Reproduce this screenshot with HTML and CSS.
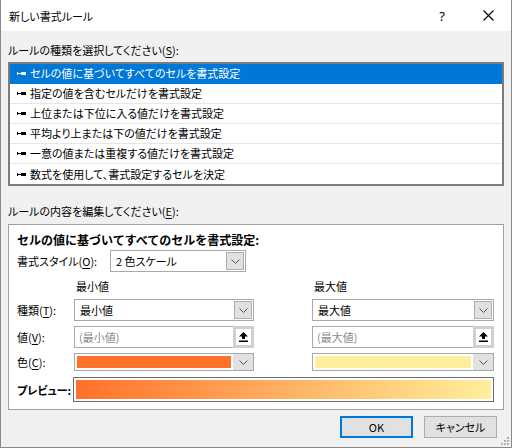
FILE: index.html
```html
<!DOCTYPE html>
<html lang="ja">
<head>
<meta charset="utf-8">
<title>新しい書式ルール</title>
<link rel="stylesheet" href="styles.css">
</head>
<body>
<div class="window">
  <div class="titlebar">
    <span class="title">新しい書式ルール</span>
    <span class="help">?</span>
    <span class="close"><svg width="11" height="11" viewBox="0 0 11 11"><path d="M0.5 0.5L10.5 10.5M10.5 0.5L0.5 10.5" stroke="#000" stroke-width="1.1" fill="none"/></svg></span>
  </div>
  <div class="body">
    <div class="label">ルールの種類を選択してください(<u>S</u>):</div>
    <ul class="rulelist">
      <li class="sel"><svg class="mark" width="9" height="5" viewBox="0 0 9 5"><path d="M0 1h1v3H0z M1 2h3v1H1z M4 1h5v3H4z" fill="currentColor"/></svg>セルの値に基づいてすべてのセルを書式設定</li>
      <li><svg class="mark" width="9" height="5" viewBox="0 0 9 5"><path d="M0 1h1v3H0z M1 2h3v1H1z M4 1h5v3H4z" fill="currentColor"/></svg>指定の値を含むセルだけを書式設定</li>
      <li><svg class="mark" width="9" height="5" viewBox="0 0 9 5"><path d="M0 1h1v3H0z M1 2h3v1H1z M4 1h5v3H4z" fill="currentColor"/></svg>上位または下位に入る値だけを書式設定</li>
      <li><svg class="mark" width="9" height="5" viewBox="0 0 9 5"><path d="M0 1h1v3H0z M1 2h3v1H1z M4 1h5v3H4z" fill="currentColor"/></svg>平均より上または下の値だけを書式設定</li>
      <li><svg class="mark" width="9" height="5" viewBox="0 0 9 5"><path d="M0 1h1v3H0z M1 2h3v1H1z M4 1h5v3H4z" fill="currentColor"/></svg>一意の値または重複する値だけを書式設定</li>
      <li><svg class="mark" width="9" height="5" viewBox="0 0 9 5"><path d="M0 1h1v3H0z M1 2h3v1H1z M4 1h5v3H4z" fill="currentColor"/></svg>数式を使用して、書式設定するセルを決定</li>
    </ul>
    <div class="label label2">ルールの内容を編集してください(<u>E</u>):</div>
    <div class="group">
      <div class="gtitle">セルの値に基づいてすべてのセルを書式設定:</div>
      <div class="stylerow">
        <span class="slabel">書式スタイル(<u>O</u>):</span>
        <div class="combo stylecombo"><span class="ctext">2 色スケール</span><span class="dd"><svg width="9" height="5" viewBox="0 0 9 5"><path d="M0.5 0.5L4.5 4.5L8.5 0.5" stroke="#555" fill="none"/></svg></span></div>
      </div>
      <div class="grid">
        <span></span><span class="colhead">最小値</span><span></span><span class="colhead">最大値</span>

        <span class="rlabel">種類(<u>T</u>):</span>
        <div class="combo"><span class="ctext">最小値</span><span class="dd"><svg width="9" height="5" viewBox="0 0 9 5"><path d="M0.5 0.5L4.5 4.5L8.5 0.5" stroke="#555" fill="none"/></svg></span></div>
        <span></span>
        <div class="combo"><span class="ctext">最大値</span><span class="dd"><svg width="9" height="5" viewBox="0 0 9 5"><path d="M0.5 0.5L4.5 4.5L8.5 0.5" stroke="#555" fill="none"/></svg></span></div>

        <span class="rlabel">値(<u>V</u>):</span>
        <div class="valuebox"><span class="vinput">(最小値)</span><span class="upbtn"><span class="upinner"><svg width="9" height="10" viewBox="0 0 9 10"><path d="M4.5 0L9 4.5H6V7H3V4.5H0z M0 8.5h9v1.5H0z" fill="#000"/></svg></span></span></div>
        <span></span>
        <div class="valuebox"><span class="vinput">(最大値)</span><span class="upbtn"><span class="upinner"><svg width="9" height="10" viewBox="0 0 9 10"><path d="M4.5 0L9 4.5H6V7H3V4.5H0z M0 8.5h9v1.5H0z" fill="#000"/></svg></span></span></div>

        <span class="rlabel">色(<u>C</u>):</span>
        <div class="combo colorcombo"><span class="swatch min"></span><span class="dd"><svg width="9" height="5" viewBox="0 0 9 5"><path d="M0.5 0.5L4.5 4.5L8.5 0.5" stroke="#555" fill="none"/></svg></span></div>
        <span></span>
        <div class="combo colorcombo"><span class="swatch max"></span><span class="dd"><svg width="9" height="5" viewBox="0 0 9 5"><path d="M0.5 0.5L4.5 4.5L8.5 0.5" stroke="#555" fill="none"/></svg></span></div>
      </div>
      <div class="previewrow">
        <span class="plabel">プレビュー:</span>
        <div class="preview"><div class="grad"></div></div>
      </div>
    </div>
    <div class="buttons">
      <button class="btn ok">OK</button>
      <button class="btn">キャンセル</button>
    </div>
  </div>
  <svg class="grip" width="8" height="8" viewBox="0 0 8 8"><path d="M6 0h2v2H6z M3 3h2v2H3z M6 3h2v2H6z M0 6h2v2H0z M3 6h2v2H3z M6 6h2v2H6z" fill="#b0b0b0"/></svg>
</div>
</body>
</html>
```

FILE: styles.css
```css
* { box-sizing: border-box; }
html, body {
  margin: 0;
  padding: 0;
  width: 512px;
  height: 448px;
  overflow: hidden;
}
body {
  font-family: "Noto Sans CJK JP", "Noto Sans", sans-serif;
  font-size: 11px;
  font-feature-settings: "palt";
  color: #000;
  background: #fff;
}
u { text-decoration-thickness: 1px; text-underline-offset: 2px; }

.window {
  position: relative;
  width: 512px;
  height: 448px;
  border: 1px solid #8a8a8a;
  border-top: none;
  display: flex;
  flex-direction: column;
  background: #f0f0f0;
}
.titlebar {
  height: 31px;
  background: #fff;
  display: flex;
  align-items: center;
  padding-left: 8px;
  flex: none;
}
.title { flex: 1; font-size: 11px; line-height: 16px; }
.help { width: 46px; text-align: center; font-size: 13px; font-family: "Noto Sans", sans-serif; }
.close { width: 46px; display: flex; justify-content: center; align-items: center; }

.body {
  flex: 1;
  padding: 11px 7px 0 7px;
  display: flex;
  flex-direction: column;
}
.label { line-height: 16px; height: 16px; white-space: nowrap; }
.label2 { margin-top: 17px; }

.rulelist {
  list-style: none;
  margin: 4px 0 0 0;
  padding: 0;
  border: 2px solid #7c7c7c;
  background: #fff;
  height: 124px;
}
.rulelist li {
  height: 20px;
  line-height: 19px;
  border-bottom: 1px solid #e6e6e6;
  display: flex;
  align-items: center;
  padding-left: 7px;
  white-space: nowrap;
}
.rulelist li:last-child { border-bottom: none; }
.rulelist li.sel { background: #0078d7; color: #fff; border-bottom-color: #0078d7; }
.mark { margin-right: 4px; flex: none; color: #000; }
.sel .mark { color: #fff; }

.group {
  margin-top: 5px;
  border: 1px solid #a0a0a0;
  background: #fff;
  height: 186px;
  padding: 7px 9px 0 8px;
}
.gtitle {
  font-weight: bold;
  font-size: 12px;
  font-feature-settings: normal;
  line-height: 16px;
  height: 16px;
  white-space: nowrap;
}
.stylerow { display: flex; align-items: center; margin-top: 2px; height: 22px; }
.slabel { width: 93px; flex: none; white-space: nowrap; }
.stylecombo { width: 136px; }

.combo {
  height: 22px;
  border: 1px solid #a9a9a9;
  background: #fff;
  display: flex;
  align-items: stretch;
  padding: 1px;
}
.ctext { flex: 1; padding-left: 4px; line-height: 18px; }
.dd {
  width: 18px;
  background: #e1e1e1;
  border: 1px solid #adadad;
  display: flex;
  align-items: center;
  justify-content: center;
}

.grid {
  display: grid;
  grid-template-columns: 57px 180px 58px 182px;
  grid-template-rows: 16px 22px 22px 18px;
  row-gap: 5px;
  margin-top: 6px;
  align-items: center;
}
.colhead { padding-left: 2px; line-height: 16px; }
.rlabel { line-height: 16px; white-space: nowrap; }

.valuebox { display: flex; height: 22px; }
.vinput {
  flex: 1;
  border: 1px solid #a9a9a9;
  border-right: none;
  color: #8a8a8a;
  padding-left: 4px;
  line-height: 20px;
}
.upbtn {
  width: 21px;
  background: #cfcfcf;
  padding: 3px;
  display: flex;
}
.upinner {
  flex: 1;
  background: #fff;
  display: flex;
  align-items: center;
  justify-content: center;
}

.colorcombo { height: 18px; padding: 2px; }
.colorcombo .dd { width: 20px; border: none; margin: -2px -2px -2px 2px; }
.swatch { flex: 1; }
.swatch.min { background: #ff7128; }
.swatch.max { background: #ffef9c; }

.previewrow { display: flex; align-items: center; margin-top: 6px; }
.plabel { width: 56px; flex: none; font-weight: bold; white-space: nowrap; }
.preview {
  flex: 1;
  height: 25px;
  border: 1px solid #6d6d6d;
  padding: 2px;
  background: #fff;
}
.grad { height: 100%; background: linear-gradient(to right, #ff7128, #ffef9c); }

.buttons {
  display: flex;
  justify-content: flex-end;
  gap: 11px;
  margin-top: 6px;
  padding-right: 7px;
}
.btn {
  width: 73px;
  height: 22px;
  background: #e1e1e1;
  border: 1px solid #adadad;
  font-family: "Noto Sans CJK JP", "Noto Sans", sans-serif;
  font-feature-settings: "palt";
  font-size: 11px;
  padding: 0;
  color: #000;
}
.btn.ok { border: 2px solid #0078d7; }

.grip { position: absolute; right: 2px; bottom: 2px; }
```
